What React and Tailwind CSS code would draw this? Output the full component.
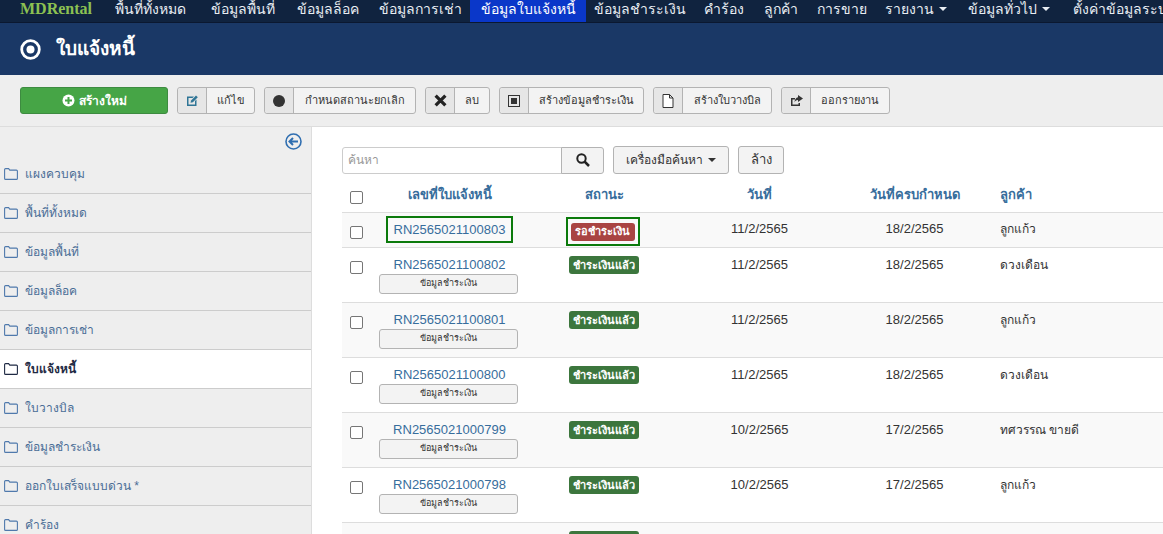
const NAV = [
  { t: "พื้นที่ทั้งหมด", w: "w-[97px]" },
  { t: "ข้อมูลพื้นที่", w: "w-[87px]" },
  { t: "ข้อมูลล็อค", w: "w-[84px]" },
  { t: "ข้อมูลการเช่า", w: "w-[100px]" },
  { t: "ข้อมูลใบแจ้งหนี้", w: "w-[116px]", active: true },
  { t: "ข้อมูลชำระเงิน", w: "w-[107px]" },
  { t: "คำร้อง", w: "w-[61px]" },
  { t: "ลูกค้า", w: "w-[54px]" },
  { t: "การขาย", w: "w-[67px]" },
  { t: "รายงาน", w: "w-[81px]", caret: true },
  { t: "ข้อมูลทั่วไป", w: "w-[106px]", caret: true },
  { t: "ตั้งค่าข้อมูลระบบ", w: "w-[125px]" },
];
const SIDE = ["แผงควบคุม","พื้นที่ทั้งหมด","ข้อมูลพื้นที่","ข้อมูลล็อค","ข้อมูลการเช่า","ใบแจ้งหนี้","ใบวางบิล","ข้อมูลชำระเงิน","ออกใบเสร็จแบบด่วน *","คำร้อง"];
const ROWS = [
  ["RN2565021100803","11/2/2565","18/2/2565","ลูกแก้ว",true],
  ["RN2565021100802","11/2/2565","18/2/2565","ดวงเดือน"],
  ["RN2565021100801","11/2/2565","18/2/2565","ลูกแก้ว"],
  ["RN2565021100800","11/2/2565","18/2/2565","ดวงเดือน"],
  ["RN2565021000799","10/2/2565","17/2/2565","ทศวรรณ ขายดี"],
  ["RN2565021000798","10/2/2565","17/2/2565","ลูกแก้ว"],
  ["RN2565021000797","10/2/2565","17/2/2565","ลูกแก้ว"],
];

function Folder({ dark }) {
  return (
    <svg width="14" height="12" viewBox="0 0 14 12" fill="none" stroke={dark ? "#1f2a44" : "#4f79ac"} strokeWidth="1.1" className="shrink-0">
      <path d="M.6 10.4V1.6q0-1 1-1h3l1.2 1.500h6.600q1 0 1 1v7.300q0 1-1 1H1.600q-1 0-1-1z" />
    </svg>
  );
}

function ToolButton({ icon, label, w }) {
  return (
    <div className={`flex h-[27px] shrink-0 items-stretch rounded-[3px] border border-[#b3b3b3] bg-[#f3f3f3] text-[11px] text-[#333] ${w}`}>
      <span className="flex w-[29px] shrink-0 items-center justify-center rounded-l-[3px] border-r border-[#b3b3b3] bg-[#e6e6e6]">{icon}</span>
      <span className="flex flex-1 items-center justify-center">{label}</span>
    </div>
  );
}

function Check() {
  return <span className="block h-[13px] w-[13px] rounded-[2px] border border-[#767676] bg-white" />;
}

function Row({ row, index }) {
  const [id, date, due, customer, waiting] = row;
  const cellTop = waiting ? "pt-[6px]" : "pt-[7px]";
  return (
    <div className={`grid grid-cols-[28px_159px_151px_159px_151px_1fr] border-b border-[#ddd] text-[13px] ${index % 2 === 0 ? "bg-[#f9f9f9]" : "bg-white"} ${waiting ? "h-[35px]" : "h-[55px]"}`}>
      <div className="pl-[8px] pt-[13px]"><Check /></div>
      <div className="flex flex-col items-center pt-[7px]">
        {waiting ? (
          <span className="-mt-[4px] flex h-[27px] w-[127px] items-center justify-center border-2 border-[#0b7a0b] leading-[20px] text-[#376d9c]">{id}</span>
        ) : (
          <>
            <span className="h-[20px] leading-[20px] text-[#376d9c]">{id}</span>
            <span className="flex h-[20px] w-[139px] -translate-x-[1px] -translate-y-[1px] items-center justify-center rounded-[3px] border border-[#b3b3b3] bg-[#f3f3f3] text-[9px] text-[#333]">ข้อมูลชำระเงิน</span>
          </>
        )}
      </div>
      <div className="flex justify-center pt-[8px]">
        {waiting ? (
          <span className="-mt-[4px] -ml-[4px] flex h-[29px] w-[74px] items-center justify-center border-2 border-[#0b7a0b]">
            <span className="flex h-[18px] w-[64px] items-center justify-center rounded-[3px] bg-[#a94442] text-[11px] font-bold text-white">รอชำระเงิน</span>
          </span>
        ) : (
          <span className="-ml-[2px] flex h-[18px] items-center rounded-[3px] bg-[#3c763d] px-[4px] text-[11px] font-bold text-white">ชำระเงินแล้ว</span>
        )}
      </div>
      <div className={`text-center leading-[20px] text-[#333] ${cellTop}`}>{date}</div>
      <div className={`text-center leading-[20px] text-[#333] ${cellTop}`}>{due}</div>
      <div className={`pl-[10px] text-[12px] leading-[20px] text-[#333] ${cellTop}`}>{customer}</div>
    </div>
  );
}

export default function App() {
  return (
    <div className="flex h-screen flex-col overflow-hidden bg-white font-['Liberation_Sans','Noto_Sans',sans-serif]">
      <nav className="flex h-[23px] shrink-0 items-stretch whitespace-nowrap border-b border-[#0b1830] bg-[#10233f] text-[14px] text-[#e8edf3]">
        <span className="flex w-[102px] shrink-0 items-center pb-[5px] pl-[20px] font-['Liberation_Serif',serif] text-[16px] font-bold text-[#8cc152]">MDRental</span>
        {NAV.map(({ t, w, active, caret }) => (
          <span key={t} className={`flex shrink-0 items-center justify-center pb-[4px] ${w} ${active ? "bg-[#0a37c9] text-white" : ""}`}>
            {t}
            {caret && <span className="ml-[5px] h-0 w-0 border-x-[4px] border-t-[4px] border-x-transparent border-t-[#e8edf3]" />}
          </span>
        ))}
      </nav>
      <header className="flex h-[52px] shrink-0 items-center gap-[15px] bg-[#1a3866] pl-[20px] text-[19px] text-white">
        <svg width="21" height="21" viewBox="0 0 21 21"><circle cx="10.500" cy="10.500" r="8.800" fill="none" stroke="#fff" strokeWidth="2.800" /><circle cx="10.500" cy="10.500" r="4" fill="#fff" /></svg>
        <span className="font-bold">ใบแจ้งหนี้</span>
      </header>
      <div className="flex h-[52px] shrink-0 items-center gap-[9px] border-b border-[#ddd] bg-[#eee] pl-[20px]">
        <div className="flex h-[27px] w-[148px] items-center justify-center gap-[4px] rounded-[3px] border border-[#3d8b40] bg-[#46a546] text-[12px] font-bold text-white">
          <svg width="13" height="13" viewBox="0 0 13 13"><circle cx="6.500" cy="6.500" r="6" fill="#fff" /><path d="M6.500 3v7M3 6.500h7" stroke="#46a546" strokeWidth="2" /></svg>
          สร้างใหม่
        </div>
        <ToolButton w="w-[78px]" label="แก้ไข" icon={<svg width="14" height="14" viewBox="0 0 14 14"><path d="M2 2.500h7L7.500 4H3.500v6.500H10V7l1.500-1.500V12H2z" fill="#2f7596" /><path d="M5.500 8.800l.6-2.400L11 1.500l1.800 1.800-4.900 4.900z" fill="#2f7596" /></svg>} />
        <ToolButton w="w-[152px]" label="กำหนดสถานะยกเลิก" icon={<span className="block h-[12px] w-[12px] rounded-full bg-[#333]" />} />
        <ToolButton w="w-[65px]" label="ลบ" icon={<svg width="13" height="13" viewBox="0 0 12 12"><path d="M1.500 1.500l9 9M10.500 1.500l-9 9" stroke="#222" strokeWidth="3" /></svg>} />
        <ToolButton w="w-[145px]" label="สร้างข้อมูลชำระเงิน" icon={<svg width="12" height="12" viewBox="0 0 12 12"><rect x=".5" y=".5" width="11" height="11" fill="none" stroke="#333" /><rect x="3" y="3" width="6" height="6" fill="#333" /></svg>} />
        <ToolButton w="w-[119px]" label="สร้างใบวางบิล" icon={<svg width="12" height="14" viewBox="0 0 12 14"><path d="M1 .5h6.500L11 4v9.500H1zM7.500.5V4H11" fill="#fff" stroke="#333" /></svg>} />
        <ToolButton w="w-[109px]" label="ออกรายงาน" icon={<svg width="13" height="12" viewBox="0 0 13 12"><path d="M1 3h4v1.500H2.500v5h6V8H10v3H1z" fill="#333" /><path d="M8 0l5 3.500L8 7V5C6 5 5 6 4.500 7.500 4.500 4.500 6 2.500 8 2.200z" fill="#333" /></svg>} />
      </div>
      <div className="flex min-h-0 flex-1">
        <aside className="w-[312px] shrink-0 border-r border-[#ddd] bg-[#eee]">
          <div className="flex h-[28px] items-start justify-end pr-[9px] pt-[6px]">
            <svg width="17" height="17" viewBox="0 0 17 17" fill="none" stroke="#2f6eb0" strokeWidth="1.600"><circle cx="8.500" cy="8.500" r="7.500" /><path d="M13 8.500H5M8 5L4.500 8.500 8 12" strokeWidth="2" /></svg>
          </div>
          {SIDE.map((s) => {
            const active = s === "ใบแจ้งหนี้";
            return (
              <div key={s} className={`flex h-[39px] items-center gap-[7px] border-b border-[#ccc] pl-[4px] text-[12px] ${active ? "bg-white font-bold text-[#1f2a44]" : "text-[#4a6d96]"}`}>
                <Folder dark={active} />
                {s}
              </div>
            );
          })}
        </aside>
        <main className="min-w-0 flex-1 pl-[30px]">
          <div className="flex items-center pt-[19px]">
            <div className="flex h-[27px] w-[262px]">
              <div className="flex flex-1 items-center rounded-l-[3px] border border-[#ccc] bg-white pl-[5px] text-[12px] text-[#999]">ค้นหา</div>
              <div className="-ml-px flex w-[43px] items-center justify-center rounded-r-[3px] border border-[#b3b3b3] bg-[#f3f3f3]">
                <svg width="14" height="14" viewBox="0 0 14 14" fill="none" stroke="#222" strokeWidth="2"><circle cx="5.500" cy="5.500" r="4.200" /><path d="M8.500 8.500l4.500 4.500" strokeWidth="2.500" /></svg>
              </div>
            </div>
            <div className="ml-[9px] flex h-[28px] w-[116px] items-center justify-center gap-[5px] rounded-[3px] border border-[#b3b3b3] bg-[#f3f3f3] text-[12px] text-[#333]">
              เครื่องมือค้นหา
              <span className="h-0 w-0 border-x-[4px] border-t-[4px] border-x-transparent border-t-[#333]" />
            </div>
            <div className="ml-[9px] flex h-[28px] w-[46px] items-center justify-center rounded-[3px] border border-[#b3b3b3] bg-[#f3f3f3] text-[13px] text-[#333]">ล้าง</div>
          </div>
          <div className="mt-[11px] w-[851px]">
            <div className="grid h-[28px] grid-cols-[28px_159px_151px_159px_151px_1fr] items-start border-b border-[#ddd] text-[13px] font-bold leading-[20px] text-[#376d9c]">
              <div className="pl-[8px] pt-[6px]"><Check /></div>
              <div className="text-center">เลขที่ใบแจ้งหนี้</div>
              <div className="text-center">สถานะ</div>
              <div className="text-center">วันที่</div>
              <div className="text-center">วันที่ครบกำหนด</div>
              <div className="pl-[10px]">ลูกค้า</div>
            </div>
            {ROWS.map((r, i) => <Row key={r[0]} row={r} index={i} />)}
          </div>
        </main>
      </div>
    </div>
  );
}
